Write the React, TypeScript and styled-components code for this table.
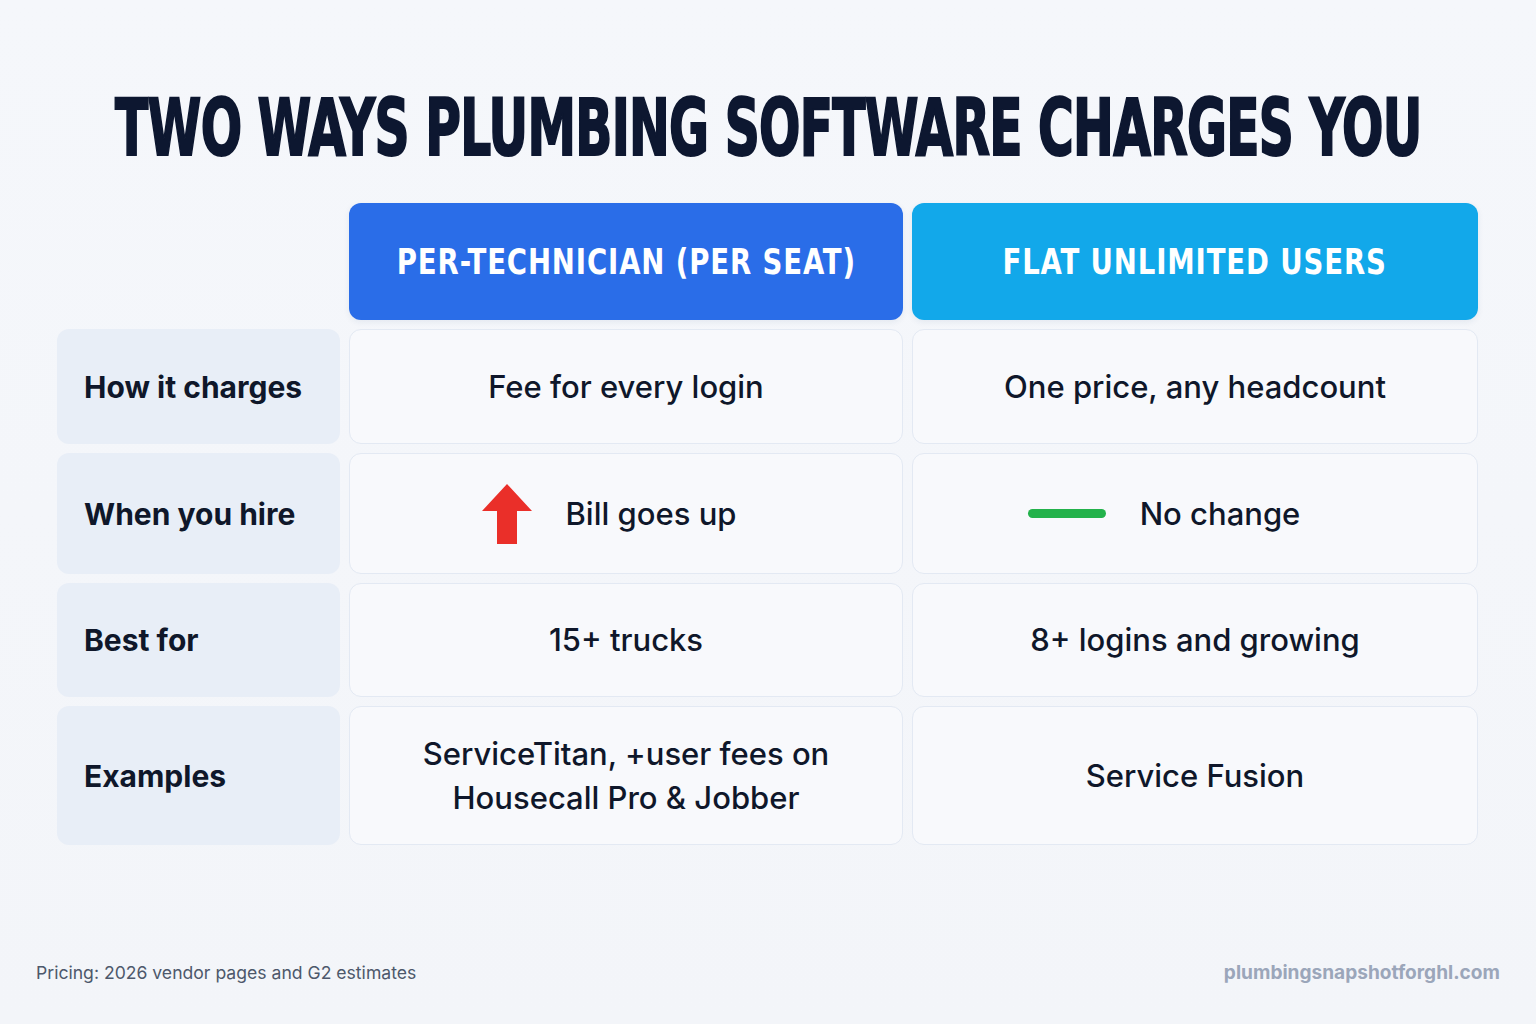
import React from "react";
import styled, { createGlobalStyle } from "styled-components";

const Global = createGlobalStyle`
  html, body { margin: 0; padding: 0; }
  body { background: #f4f6fa; font-family: Inter, "Noto Sans", sans-serif; }
`;

const Page = styled.div`
  width: 1536px;
  height: 1024px;
  box-sizing: border-box;
  display: flex;
  flex-direction: column;
  background: linear-gradient(180deg, #f5f7fb 0%, #f3f5f9 100%);
  padding: 84px 57px 0 57px;
`;

const TitleWrap = styled.div`
  display: flex;
  justify-content: center;
  height: 88px;
  align-items: center;
`;

const Title = styled.h1`
  margin: 0;
  font-family: "DejaVu Sans Condensed", "DejaVu Sans", sans-serif;
  font-weight: 700;
  font-size: 78px;
  line-height: 1;
  color: #0d1730;
  white-space: nowrap;
  letter-spacing: -1px;
  -webkit-text-stroke: 2px #0d1730;
  transform: scaleX(0.694);
`;

const Grid = styled.div`
  margin-top: 31px;
  display: grid;
  grid-template-columns: 283px 554px 566px;
  grid-template-rows: 117px 115px 121px 114px 139px;
  column-gap: 9px;
  row-gap: 9px;
`;

const Header = styled.div<{ $bg: string }>`
  background: ${(p) => p.$bg};
  border-radius: 12px;
  display: flex;
  align-items: center;
  justify-content: center;
  box-shadow: 0 2px 6px rgba(30, 60, 120, 0.08);
`;

const HeaderText = styled.span`
  color: #ffffff;
  font-family: "DejaVu Sans Condensed", "DejaVu Sans", sans-serif;
  font-weight: 700;
  font-size: 35px;
  letter-spacing: 1px;
  white-space: nowrap;
  transform: scaleX(0.875);
`;

const Blank = styled.div``;

const Label = styled.div`
  background: #e8eef7;
  border-radius: 12px;
  display: flex;
  align-items: center;
  padding-left: 27px;
  font-family: Inter, "Noto Sans", sans-serif;
  font-weight: 700;
  font-size: 30px;
  color: #0f172a;
`;

const Cell = styled.div<{ $offset?: number }>`
  background: #f8f9fc;
  border: 1.5px solid #e3e9f3;
  border-radius: 12px;
  display: flex;
  align-items: center;
  justify-content: center;
  gap: 34px;
  padding-right: ${(p) => p.$offset ?? 0}px;
  font-family: Inter, "Noto Sans", sans-serif;
  font-weight: 500;
  font-size: 31px;
  line-height: 44px;
  color: #0f172a;
  text-align: center;
`;

const Dash = styled.div`
  width: 78px;
  height: 9px;
  border-radius: 5px;
  background: #23b24b;
`;

const Footer = styled.div`
  margin-top: auto;
  display: flex;
  justify-content: space-between;
  align-items: center;
  padding: 0 36px 40px 36px;
  margin-left: -57px;
  margin-right: -57px;
`;

const Source = styled.div`
  font-family: Inter, "Noto Sans", sans-serif;
  font-size: 17.6px;
  color: #4d586b;
`;

const Site = styled.div`
  font-family: Inter, "Noto Sans", sans-serif;
  font-weight: 700;
  font-size: 19.1px;
  color: #9ba6ba;
`;

const UpArrow = () => (
  <svg width="50" height="60" viewBox="0 0 50 60">
    <path d="M25 0 L50 27 L35 27 L35 60 L15 60 L15 27 L0 27 Z" fill="#ea2f29" />
  </svg>
);

export default function App() {
  return (
    <>
      <Global />
      <Page>
        <TitleWrap>
          <Title>TWO WAYS PLUMBING SOFTWARE CHARGES YOU</Title>
        </TitleWrap>
        <Grid>
          <Blank />
          <Header $bg="#2a6de8">
            <HeaderText>PER-TECHNICIAN (PER SEAT)</HeaderText>
          </Header>
          <Header $bg="#12a8ea">
            <HeaderText>FLAT UNLIMITED USERS</HeaderText>
          </Header>

          <Label>How it charges</Label>
          <Cell>Fee for every login</Cell>
          <Cell>One price, any headcount</Cell>

          <Label>When you hire</Label>
          <Cell $offset={34}>
            <UpArrow />
            <span>Bill goes up</span>
          </Cell>
          <Cell $offset={62}>
            <Dash />
            <span>No change</span>
          </Cell>

          <Label>Best for</Label>
          <Cell>15+ trucks</Cell>
          <Cell>8+ logins and growing</Cell>

          <Label>Examples</Label>
          <Cell>
            ServiceTitan, +user fees on
            <br />
            Housecall Pro &amp; Jobber
          </Cell>
          <Cell>Service Fusion</Cell>
        </Grid>
        <Footer>
          <Source>Pricing: 2026 vendor pages and G2 estimates</Source>
          <Site>plumbingsnapshotforghl.com</Site>
        </Footer>
      </Page>
    </>
  );
}
